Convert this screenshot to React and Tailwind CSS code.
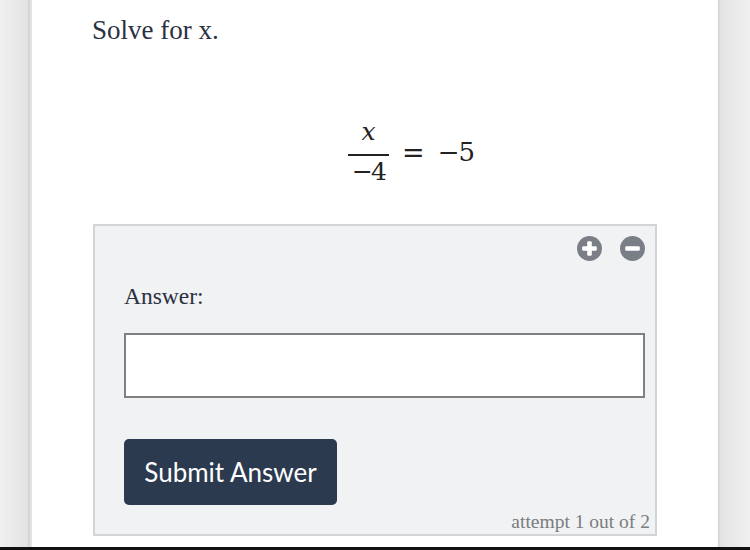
import React from 'react';

const serif = { fontFamily: '"Liberation Serif", "DejaVu Serif", serif' };
const mathFont = { fontFamily: '"DejaVu Serif", "Liberation Serif", serif' };

const CircleIcon = ({ plus }) => (
    <svg width="25" height="25" viewBox="0 0 24 24">
        <circle cx="12" cy="12" r="12" fill="#7a7e86" />
        <rect x="5" y="9.8" width="14" height="4.4" rx="1.2" fill="#ffffff" />
        {plus && <rect x="9.8" y="5" width="4.4" height="14" rx="1.2" fill="#ffffff" />}
    </svg>
);

const App = () => {
    return (
        <div className="w-[750px] h-[550px] overflow-hidden bg-[#ececec] flex flex-col">
            <div className="flex flex-1 min-h-0">
                {/* left margin */}
                <div className="w-[28px] bg-gradient-to-r from-[#f1f1f1] to-[#e2e2e2]" />
                <div className="w-[4px] bg-gradient-to-r from-[#cfcfcf] to-[#e8e8e8]" />

                {/* card */}
                <div className="w-[686px] bg-white pl-[60px] pr-[61px] pt-[14px]" style={serif}>
                    <div className="text-[27px] leading-[32px] text-[#2a3140]">Solve for x.</div>

                    {/* equation */}
                    <div className="h-[178px] pt-[72px] pl-[256px] text-[#222]" style={mathFont}>
                        <div className="flex items-center">
                            <div className="flex flex-col items-center w-[41px]">
                                <span className="italic text-[25px] leading-[28px] pb-[8px]">x</span>
                                <div className="w-[41px] h-[1.5px] bg-[#222]" />
                                <span className="text-[25px] leading-[32px] tracking-[-2px]">−4</span>
                            </div>
                            <span className="text-[27px] ml-[13px] mr-[13px]">=</span>
                            <span className="text-[26px] tracking-[-1px]">−5</span>
                        </div>
                    </div>

                    {/* answer box */}
                    <div className="ml-[1px] h-[312px] border-2 border-[#d3d4d6] bg-[#f1f2f4] pl-[29px] pr-[10px] flex flex-col">
                        <div className="flex justify-end gap-[18px] pt-[10px]">
                            <CircleIcon plus />
                            <CircleIcon />
                        </div>
                        <div className="text-[23.5px] text-[#2a3140] mt-[21px] leading-[28px]">Answer:</div>
                        <input
                            type="text"
                            className="mt-[23px] h-[66px] border-2 border-[#808080] bg-white outline-none"
                        />
                        <div className="mt-[41px]">
                            <button
                                className="w-[213px] h-[66px] rounded-[5px] bg-[#2b3a4f] text-white text-[26px]"
                                style={{ fontFamily: 'Lato, "Open Sans", sans-serif' }}
                            >
                                Submit Answer
                            </button>
                        </div>
                        <div className="text-right text-[19.5px] text-[#7a7c80] mt-[5px] -mr-[5px] leading-[24px]">attempt 1 out of 2</div>
                    </div>
                </div>

                {/* right margin */}
                <div className="w-[3px] bg-gradient-to-r from-[#cfcfcf] to-[#e6e6e6]" />
                <div className="flex-1 bg-gradient-to-r from-[#e4e4e4] to-[#f0f0f0]" />
            </div>
            <div className="h-[3px] bg-[#111]" />
        </div>
    );
};

export default App;
